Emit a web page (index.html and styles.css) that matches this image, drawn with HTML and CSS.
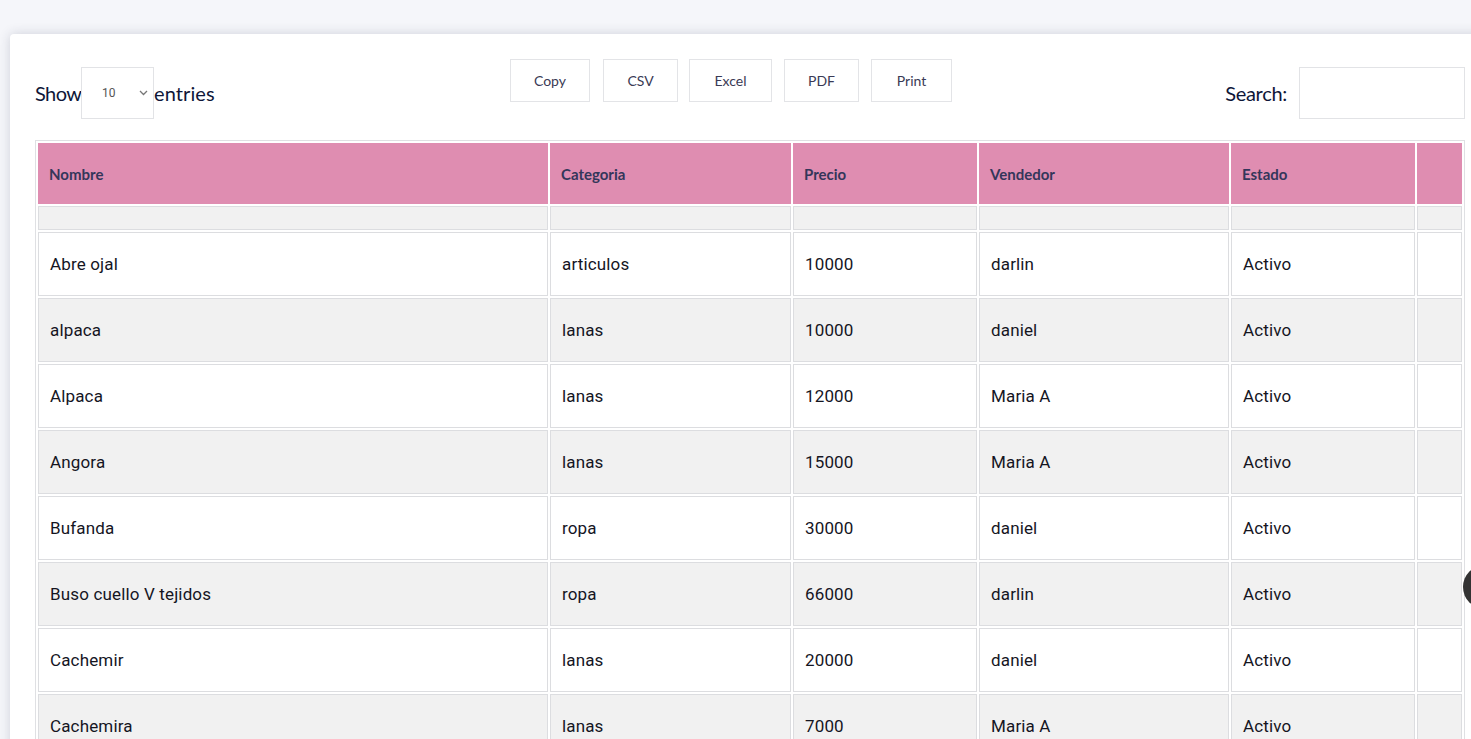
FILE: index.html
```html
<!DOCTYPE html>
<html lang="es">
<head>
<meta charset="utf-8">
<title>Productos</title>
<link rel="stylesheet" href="styles.css">
</head>
<body>
<div class="card">
  <div class="toolbar">
    <div class="length">
      <span class="lbl-show">Show</span>
      <div class="select"><span class="sel-val">10</span>
        <svg class="chev" width="9" height="6" viewBox="0 0 9 6"><path d="M1 1l3.5 3.5L8 1" fill="none" stroke="#777" stroke-width="1.3"/></svg>
      </div>
      <span class="lbl-entries">entries</span>
    </div>
    <div class="buttons">
      <button class="btn b-copy">Copy</button>
      <button class="btn b-csv">CSV</button>
      <button class="btn b-excel">Excel</button>
      <button class="btn b-pdf">PDF</button>
      <button class="btn b-print">Print</button>
    </div>
    <div class="filter">
      <span>Search:</span>
      <div class="search"></div>
    </div>
  </div>
  <table class="grid">
    <colgroup>
      <col class="c1"><col class="c2"><col class="c3"><col class="c4"><col class="c5"><col class="c6">
    </colgroup>
    <thead>
      <tr class="head"><th>Nombre</th><th>Categoria</th><th>Precio</th><th>Vendedor</th><th>Estado</th><th></th></tr>
      <tr class="frow"><td></td><td></td><td></td><td></td><td></td><td></td></tr>
    </thead>
    <tbody>
      <tr><td>Abre ojal</td><td>articulos</td><td>10000</td><td>darlin</td><td>Activo</td><td></td></tr>
      <tr class="alt"><td>alpaca</td><td>lanas</td><td>10000</td><td>daniel</td><td>Activo</td><td></td></tr>
      <tr><td>Alpaca</td><td>lanas</td><td>12000</td><td>Maria A</td><td>Activo</td><td></td></tr>
      <tr class="alt"><td>Angora</td><td>lanas</td><td>15000</td><td>Maria A</td><td>Activo</td><td></td></tr>
      <tr><td>Bufanda</td><td>ropa</td><td>30000</td><td>daniel</td><td>Activo</td><td></td></tr>
      <tr class="alt"><td>Buso cuello V tejidos</td><td>ropa</td><td>66000</td><td>darlin</td><td>Activo</td><td></td></tr>
      <tr><td>Cachemir</td><td>lanas</td><td>20000</td><td>daniel</td><td>Activo</td><td></td></tr>
      <tr class="alt"><td>Cachemira</td><td>lanas</td><td>7000</td><td>Maria A</td><td>Activo</td><td></td></tr>
    </tbody>
  </table>
</div>
<div class="to-top"></div>
</body>
</html>
```

FILE: styles.css
```css
* { box-sizing: border-box; }
html, body { overflow: hidden; }
body {
  margin: 0;
  background: #f5f6fa;
  font-family: "Lato", "Noto Sans", sans-serif;
  height: 739px;
}
.card {
  margin: 34px 0 0 10px;
  width: 1480px;
  background: #fff;
  border-radius: 4px 0 0 0;
  box-shadow: 0 0 12px rgba(40, 45, 70, 0.18);
  padding: 25px 25px 40px 25px;
}
.toolbar {
  display: flex;
  align-items: flex-start;
}
.length {
  width: 475px;
  margin-top: 8px;
  display: flex;
  align-items: center;
  font-size: 20px;
  color: #0e1638;
  height: 52px;
}
.lbl-show { width: 46px; letter-spacing: -0.6px; white-space: nowrap; }
.lbl-entries { letter-spacing: 0.1px; }
.select {
  width: 73px;
  height: 52px;
  border: 1px solid #e2e3e6;
  display: flex;
  align-items: center;
  padding: 0 5px 0 20px;
  justify-content: space-between;
}
.sel-val { font-size: 12px; color: #555; font-family: "Roboto", sans-serif; }
.chev { display: block; }
.buttons { display: flex; }
.btn {
  height: 43px;
  border: 1px solid #e3e4e7;
  background: #fff;
  font-family: "Lato", sans-serif;
  font-size: 14px;
  color: #3a3a55;
  padding: 0;
}
.b-copy { width: 80px; }
.b-csv { width: 75px; margin-left: 13px; }
.b-excel { width: 83px; margin-left: 11px; }
.b-pdf { width: 75px; margin-left: 12px; }
.b-print { width: 81px; margin-left: 12px; }
.filter {
  margin-left: auto;
  margin-top: 8px;
  display: flex;
  align-items: center;
  font-size: 20px;
  color: #0e1638;
  letter-spacing: -0.3px;
}
.search {
  width: 166px;
  height: 52px;
  border: 1px solid #e2e3e6;
  margin-left: 12px;
}
.grid {
  margin-top: 21px;
  width: 1430px;
  table-layout: fixed;
  border: 1px solid #dfe0e3;
  border-spacing: 2px;
}
.c1 { width: 510px; }
.c2 { width: 241px; }
.c3 { width: 184px; }
.c4 { width: 250px; }
.c5 { width: 184px; }
.c6 { width: 45px; }
.head th {
  height: 61px;
  background: #df8db1;
  color: #34365a;
  font-size: 15px;
  font-weight: 700;
  text-align: left;
  padding: 0 10px;
  border: 1px solid #df8db1;
}
.frow td {
  height: 24px;
  background: #f1f1f1;
  border: 1px solid #dcdde0;
}
tbody td {
  height: 64px;
  border: 1px solid #dcdde0;
  padding: 0 11px;
  font-family: "Roboto", sans-serif;
  font-size: 17px;
  letter-spacing: 0.15px;
  color: #15151f;
  background: #fff;
}
tbody tr.alt td { background: #f1f1f1; }
.to-top {
  position: fixed;
  left: 1463px;
  top: 565px;
  width: 44px;
  height: 44px;
  border-radius: 50%;
  background: #333;
}
```
